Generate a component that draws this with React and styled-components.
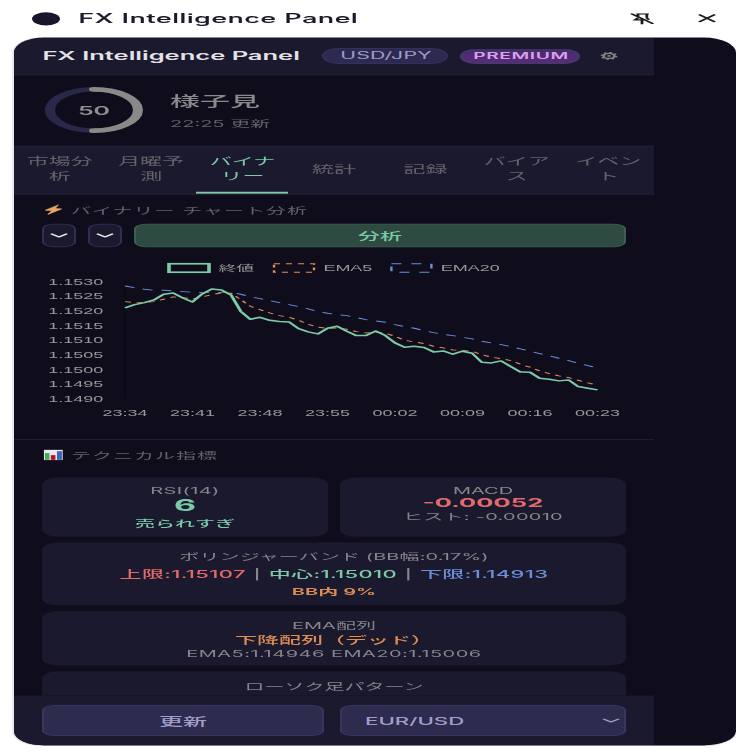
import React from "react";
import styled, { createGlobalStyle } from "styled-components";

const Global = createGlobalStyle`
  *, *::before, *::after { box-sizing: border-box; }
  html, body { margin: 0; padding: 0; background: #fff; overflow: hidden; }
  button { font: inherit; margin: 0; padding: 0; cursor: pointer; }
`;

const Viewport = styled.div`
  width: 752px;
  height: 752px;
  overflow: hidden;
`;

/* The panel is laid out at 376x800 and stretched to fill the viewport. */
const Stage = styled.div`
  width: 376px;
  height: 800px;
  display: flex;
  flex-direction: column;
  transform: scale(2, 0.94);
  transform-origin: 0 0;
  font-family: Inter, "Noto Sans CJK JP", sans-serif;
  white-space: nowrap;
`;

const TitleBar = styled.div`
  flex: none;
  height: 39.5px;
  padding: 0 18.5px 0.5px 16.2px;
  display: flex;
  align-items: center;
  color: #1c1a29;
`;

const AppDot = styled.span`
  width: 14px;
  height: 14px;
  border-radius: 50%;
  background: #18162c;
  margin-right: 9px;
`;

const AppName = styled.span`
  flex: 1;
  font-size: 13.3px;
  line-height: 16px;
  padding-bottom: 0.6px;
  font-weight: 500;
  letter-spacing: 0.34px;
  -webkit-text-stroke: 0.15px currentColor;
`;

const TitleIcon = styled.svg`
  width: ${(p) => p.$size}px;
  height: ${(p) => p.$size}px;
  margin-left: ${(p) => p.$gap || 0}px;
  fill: none;
  stroke: #1c1b22;
  stroke-width: 1.4;
`;

const Frame = styled.div`
  flex: none;
  width: 361.5px;
  height: 754px;
  margin-left: 6px;
  border: 1px solid #efe4f1;
  border-right-width: 0;
  border-top-width: 0;
  border-radius: 16px;
  background: #0f0d1c;
  overflow: hidden;
`;

const Page = styled.div`
  width: 320px;
  height: 100%;
  display: flex;
  flex-direction: column;
`;

const Header = styled.header`
  flex: none;
  height: 40.5px;
  padding: 0.5px 14px 0 14.2px;
  display: flex;
  align-items: center;
  background: #1b192d;
  border-bottom: 1px solid #25233b;
`;

const Brand = styled.h1`
  flex: none;
  margin: 0;
  width: 140.3px;
  font-size: 12.75px;
  font-weight: 600;
  line-height: 16px;
  padding-top: 0.5px;
  color: #e4e2e6;
`;

const Pill = styled.span`
  flex: none;
  display: flex;
  align-items: center;
  justify-content: center;
  width: ${(p) => p.$w}px;
  height: ${(p) => p.$h}px;
  border-radius: 10px;
  margin-right: 6px;
  font-size: ${(p) => p.$size}px;
  font-weight: ${(p) => (p.$premium ? 600 : 400)};
  letter-spacing: ${(p) => (p.$premium ? "0.3px" : "0.1px")};
  color: ${(p) => (p.$premium ? "#d6a3ea" : "#a09cc8")};
  background: ${(p) => (p.$premium ? "linear-gradient(#472a72, #5a2b78)" : "#2c2a50")};
  border: 1px solid ${(p) => (p.$premium ? "#433c69" : "#33315c")};
`;

const Gear = styled.button`
  flex: none;
  width: 17px;
  height: 18px;
  border: 0;
  background: none;
  color: #858585;
  display: flex;
  align-items: center;
  justify-content: center;
  svg { width: 9px; height: 9px; }
`;

const Score = styled.section`
  flex: none;
  height: 74.5px;
  padding: 11px 14px 0;
  display: flex;
  gap: 12px;
`;

const RingBox = styled.div`
  display: grid;
  width: 52px;
  height: 52px;
  place-items: center;
  > * { grid-area: 1 / 1; }
`;

const RingValue = styled.span`
  font-size: 12.5px;
  font-weight: 600;
  color: #8f8f8f;
`;

const ScoreText = styled.div`
  padding-top: 5px;
`;

const Text = styled.div`
  font-size: ${(p) => p.$size || 10}px;
  line-height: ${(p) => p.$lh}px;
  font-weight: ${(p) => p.$weight || 400};
  letter-spacing: ${(p) => p.$ls || 0}px;
  word-spacing: ${(p) => p.$ws || 0}px;
  color: ${(p) => p.$color || "#88868c"};
`;

const Tabs = styled.nav`
  flex: none;
  height: 52px;
  display: grid;
  grid-template-columns: repeat(7, 1fr);
  background: #1b192d;
  border-top: 1px solid #25233b;
  border-bottom: 1px solid #25233b;
`;

const Tab = styled.button`
  border: 0;
  border-bottom: 2px solid ${(p) => (p.$active ? "#7bcba8" : "transparent")};
  background: none;
  display: flex;
  flex-direction: column;
  align-items: center;
  justify-content: center;
  font-size: 11px;
  line-height: 16px;
  color: ${(p) => (p.$active ? "#7bcba8" : "#66636b")};
`;

const Scroll = styled.main`
  flex: 1;
  min-height: 0;
  overflow: hidden;
`;

const Section = styled.section`
  height: ${(p) => p.$h}px;
  padding: ${(p) => p.$top}px 14px 0;
  border-bottom: 1px solid #211f35;
`;

const SectionTitle = styled.h2`
  margin: 0 0 ${(p) => p.$gap}px;
  height: 15px;
  display: flex;
  align-items: center;
  font-size: 10px;
  font-weight: 400;
  letter-spacing: 0.5px;
  color: #64626a;
  svg { width: 11.5px; height: 12px; margin-right: 3px; }
`;

const Controls = styled.div`
  display: flex;
  gap: 6px;
  height: 25.8px;
`;

const MiniSelect = styled.button`
  width: 17px;
  border: 1px solid #302d57;
  border-radius: 6px;
  background: #1b192d;
  color: #ecebf2;
  display: flex;
  align-items: center;
  justify-content: center;
  padding: 0 0 0.5px 0.4px;
`;

const Analyze = styled.button`
  flex: 1;
  padding-bottom: 1.5px;
  border: 1px solid #385f50;
  border-radius: 6px;
  background: #2f4a40;
  color: #7bcba8;
  font-size: 11px;
  font-weight: 500;
`;

const ChartSvg = styled.svg`
  display: block;
  width: 306px;
  height: 190px;
  text {
    font-family: "Liberation Sans", "Noto Sans CJK JP", sans-serif;
    font-size: 9px;
    fill: #98989b;
  }
`;

const Cards = styled.div`
  display: grid;
  grid-template-columns: 1fr 1fr;
  gap: 6px;
`;

const Card = styled.div`
  grid-column: ${(p) => (p.$wide ? "1 / -1" : "auto")};
  height: ${(p) => p.$h}px;
  padding-top: 7px;
  border-radius: 8px;
  background: #1b192d;
  text-align: center;
`;

const Tone = styled.span`
  color: ${(p) => p.$c};
`;

const Footer = styled.footer`
  flex: none;
  height: 52.5px;
  padding: 10.3px 14px 0;
  display: flex;
  gap: 8px;
  background: #1b192d;
`;

const FooterButton = styled.button`
  width: ${(p) => p.$w}px;
  height: 32.6px;
  padding: ${(p) => (p.$select ? "0 2.5px 0 11.5px" : "0")};
  border: 1px solid #383563;
  border-radius: 6px;
  background: #2d2b4e;
  color: #a29ecb;
  font-size: ${(p) => (p.$select ? "11.1px" : "12px")};
  font-weight: 500;
  display: flex;
  align-items: center;
  justify-content: ${(p) => (p.$select ? "space-between" : "center")};
`;

const Chevron = () => (
  <svg width="9" height="5" viewBox="0 0 9 5" fill="none" stroke="currentColor" strokeWidth="1.2">
    <path d="M0.5 0.7 L4.5 4.1 L8.5 0.7" />
  </svg>
);

const CLOSE = [160, 150, 144, 136, 119, 115, 130, 142, 118, 103, 106, 121, 170, 194, 188, 197, 201, 202, 222, 232, 238, 221, 215, 230, 243, 243, 229, 243, 265, 278, 275, 279, 292, 289, 299, 290, 296, 323, 325, 319, 336, 352, 353, 371, 374, 379, 376, 396, 401, 406];
const EMA5 = [141, 144, 144, 141, 134, 127, 129, 133, 127, 120, 115, 116, 135, 155, 165, 175, 183, 188, 197, 209, 218, 221, 220, 224, 231, 235, 233, 236, 245, 257, 262, 267, 275, 280, 286, 288, 290, 300, 308, 312, 318, 329, 338, 349, 357, 364, 369, 377, 385, 392];
const EMA20 = [94, 99, 104, 107, 107, 109, 111, 113, 114, 114, 114, 113, 119, 126, 132, 138, 144, 150, 156, 163, 171, 176, 180, 183, 189, 195, 199, 203, 210, 216, 221, 228, 234, 239, 243, 248, 253, 260, 265, 270, 276, 283, 290, 297, 304, 311, 318, 326, 333, 340];

const X0 = 41.5;
const STEP = 4.8214;
const TOP = 36.6;
const TICK = 15.57;
const UNIT = (TICK * 8) / 351.5;

const toLine = (series) =>
  series.map((v, i) => `${i ? "L" : "M"}${(X0 + i * STEP).toFixed(2)} ${(TOP + (v - 81) * UNIT).toFixed(2)}`).join(" ");

const Y_TICKS = ["1.1530", "1.1525", "1.1520", "1.1515", "1.1510", "1.1505", "1.1500", "1.1495", "1.1490"];
const X_TICKS = ["23:34", "23:41", "23:48", "23:55", "00:02", "00:09", "00:16", "00:23"];
const LEGEND = [
  { x: 63.5, label: "終値", color: "#7bcba8", width: 1.8 },
  { x: 116, label: "EMA5", color: "#de8e54", width: 1.2, dash: "3 3" },
  { x: 174.7, label: "EMA20", color: "#6b8fd8", width: 1.2, dash: "5 5" },
];

const Chart = () => (
  <ChartSvg viewBox="0 0 306 190">
    {LEGEND.map((l) => (
      <g key={l.label}>
        <rect x={l.x} y="17.6" width="20" height="9" fill="none" stroke={l.color} strokeWidth={l.width} strokeDasharray={l.dash} />
        <text x={l.x + 24.7} y="25.2">{l.label}</text>
      </g>
    ))}
    <path d={`M${X0} ${TOP} V${TOP + TICK * 8}`} stroke="#0b0a16" strokeWidth="1" />
    {Y_TICKS.map((t, i) => (
      <text key={t} x="30.6" y={TOP + i * TICK + 3.3} textAnchor="end">{t}</text>
    ))}
    {X_TICKS.map((t, i) => (
      <text key={t} x={X0 + i * 7 * STEP} y="179.9" textAnchor="middle">{t}</text>
    ))}
    <g fill="none" strokeLinejoin="round">
      <path d={toLine(EMA20)} stroke="#6b8fd8" strokeDasharray="5 4.5" />
      <path d={toLine(EMA5)} stroke="#de8e54" strokeDasharray="3 3" />
      <path d={toLine(CLOSE)} stroke="#7bcba8" strokeWidth="1.6" />
    </g>
  </ChartSvg>
);

const TABS = [["市場分", "析"], ["月曜予", "測"], ["バイナ", "リー"], ["統計"], ["記録"], ["バイア", "ス"], ["イベン", "ト"]];

export default function App() {
  return (
    <Viewport>
      <Global />
      <Stage>
        <TitleBar>
          <AppDot />
          <AppName>FX Intelligence Panel</AppName>
          <TitleIcon $size={12} viewBox="0 0 12 12">
            <path d="M0.4 0.4 L11.6 11.4 M3.2 0.8 H9.4 M8.4 1 V5 M4 1 V3.4 M4 5 L2.5 7.2 H6.8 M8.3 5 L9.5 7 M6 7.2 V12" />
          </TitleIcon>
          <TitleIcon $size={9} $gap={22} viewBox="0 0 9 9">
            <path d="M0.5 0.5 L8.5 8.5 M8.5 0.5 L0.5 8.5" />
          </TitleIcon>
        </TitleBar>
        <Frame>
          <Page>
            <Header>
              <Brand>FX Intelligence Panel</Brand>
              <Pill $w={63} $h={17.5} $size={10.6}>USD/JPY</Pill>
              <Pill $w={60} $h={16} $size={9.6} $premium>PREMIUM</Pill>
              <Gear aria-label="settings">
                <svg viewBox="0 0 20 20" fill="none" stroke="currentColor">
                  <circle cx="10" cy="10" r="6" strokeWidth="3" />
                  <circle cx="10" cy="10" r="8" strokeWidth="2.6" strokeDasharray="3.14 3.14" />
                  <circle cx="10" cy="10" r="2" fill="currentColor" stroke="none" />
                </svg>
              </Gear>
            </Header>
            <Score>
              <RingBox>
                <svg width="52" height="52" viewBox="0 0 52 52" fill="none" strokeWidth="5">
                  <circle cx="26" cy="26" r="22" stroke="#2a2848" />
                  <path d="M26 4 A22 22 0 0 1 26 48" stroke="#8a8988" strokeLinecap="round" />
                </svg>
                <RingValue>50</RingValue>
              </RingBox>
              <ScoreText>
                <Text $size={15} $lh={24} $weight={500} $color="#8a898c">様子見</Text>
                <Text $size={10} $lh={22} $color="#64626a">22:25 更新</Text>
              </ScoreText>
            </Score>
            <Tabs>
              {TABS.map((lines) => (
                <Tab key={lines[0]} $active={lines[0] === "バイナ"}>
                  {lines.map((l) => <span key={l}>{l}</span>)}
                </Tab>
              ))}
            </Tabs>
            <Scroll>
              <Section $h={261} $top={9}>
                <SectionTitle $gap={7.2}>
                  <svg viewBox="0 0 12 12">
                    <path d="M8.6 0.8 L1.8 6.6 L5.2 7 L3 11.4 L10.2 5.2 L6.8 4.8 Z" fill="#f2a052" stroke="#f7c58a" strokeWidth="0.4" />
                  </svg>
                  バイナリー チャート分析
                </SectionTitle>
                <Controls>
                  <MiniSelect aria-label="pair"><Chevron /></MiniSelect>
                  <MiniSelect aria-label="interval"><Chevron /></MiniSelect>
                  <Analyze>分析</Analyze>
                </Controls>
                <Chart />
              </Section>
              <Section $h={400} $top={8.7}>
                <SectionTitle $gap={16.8}>
                  <svg viewBox="0 0 12 12" preserveAspectRatio="none">
                    <rect x="1" y="0.5" width="9.8" height="11" fill="#ece9f0" />
                    <rect x="1.5" y="4" width="2.4" height="7.2" fill="#3fae5a" />
                    <rect x="4.6" y="6.2" width="2.4" height="5" fill="#b5121b" />
                    <rect x="7.8" y="2" width="2.6" height="9.2" fill="#3f66b0" />
                  </svg>
                  テクニカル指標
                </SectionTitle>
                <Cards>
                  <Card $h={63}>
                    <Text $lh={14} $ls={0.2}>RSI(14)</Text>
                    <Text $lh={19.6} $size={17} $weight={700} $color="#7bcba8">6</Text>
                    <Text $lh={16} $weight={500} $color="#7bcba8">売られすぎ</Text>
                  </Card>
                  <Card $h={63}>
                    <Text $lh={14}>MACD</Text>
                    <Text $lh={12.5} $size={12.8} $weight={700} $color="#e3696b">-0.00052</Text>
                    <Text $lh={17.6} $ls={0.13}>ヒスト: -0.00010</Text>
                  </Card>
                  <Card $wide $h={67.3}>
                    <Text $lh={17.5} $ls={0.05}>ボリンジャーバンド (BB幅:0.17%)</Text>
                    <Text $lh={21} $size={11} $weight={500} $ls={0.18} $ws={0.6}>
                      <Tone $c="#e3696b">上限:1.15107</Tone> | <Tone $c="#7bcba8">中心:1.15010</Tone> | <Tone $c="#6b8fd8">下限:1.14913</Tone>
                    </Text>
                    <Text $lh={14} $weight={600} $color="#de8e54">BB内 9%</Text>
                  </Card>
                  <Card $wide $h={57.7}>
                    <Text $lh={17}>EMA配列</Text>
                    <Text $lh={14} $size={11} $weight={500} $color="#de8e54">下降配列（デッド）</Text>
                    <Text $lh={15} $ls={0.24}>EMA5:1.14946 EMA20:1.15006</Text>
                  </Card>
                  <Card $wide $h={57}>
                    <Text $lh={18}>ローソク足パターン</Text>
                  </Card>
                </Cards>
              </Section>
            </Scroll>
            <Footer>
              <FooterButton $w={141}>更新</FooterButton>
              <FooterButton $w={143} $select>EUR/USD<Chevron /></FooterButton>
            </Footer>
          </Page>
        </Frame>
      </Stage>
    </Viewport>
  );
}
